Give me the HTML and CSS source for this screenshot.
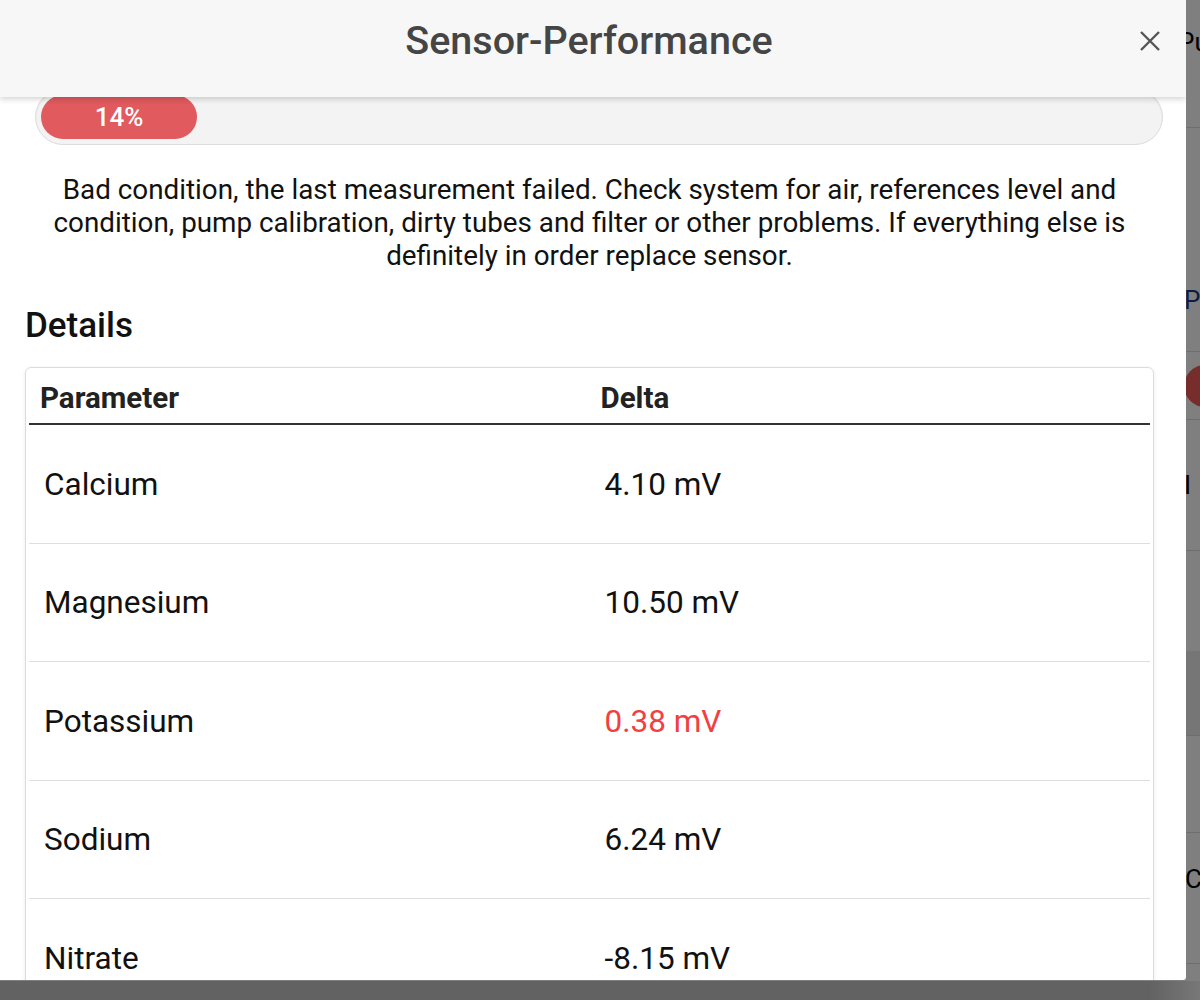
FILE: index.html
```html
<!DOCTYPE html>
<html lang="en">
<head>
<meta charset="utf-8">
<title>Sensor-Performance</title>
<link rel="stylesheet" href="styles.css">
</head>
<body>
<div class="bg-page">
  <div class="bg-row bg-r1"><span class="bg-txt">Pu</span></div>
  <div class="bg-row bg-r2"><span class="bg-txt bg-blue">P</span></div>
  <div class="bg-row bg-r3"><span class="bg-dot"></span></div>
  <div class="bg-row bg-r4"><span class="bg-txt">I</span></div>
  <div class="bg-row bg-r5"></div>
  <div class="bg-row bg-r6 bg-shade"></div>
  <div class="bg-row bg-r7"></div>
  <div class="bg-row bg-r8"><span class="bg-txt">Cc</span></div>
  <div class="bg-row bg-r9"></div>
  <div class="bg-footer"></div>
</div>
<div class="backdrop"></div>

<div class="modal">
  <header class="modal-header">
    <h1 class="modal-title">Sensor-Performance</h1>
    <button class="close-btn" aria-label="Close">
      <svg width="20" height="20" viewBox="0 0 20 20"><path d="M1 1 L19 19 M19 1 L1 19" stroke="#555" stroke-width="2.4" fill="none"/></svg>
    </button>
  </header>
  <div class="modal-body">
    <div class="body-inner">
      <div class="progress">
        <div class="progress-fill" style="width:14%">14%</div>
      </div>
      <p class="message">Bad condition, the last measurement failed. Check system for air, references level and condition, pump calibration, dirty tubes and filter or other problems. If everything else is definitely in order replace sensor.</p>
      <h2 class="section-title">Details</h2>
      <div class="card">
        <table class="details">
          <thead>
            <tr><th>Parameter</th><th>Delta</th></tr>
          </thead>
          <tbody>
            <tr><td>Calcium</td><td>4.10 mV</td></tr>
            <tr><td>Magnesium</td><td>10.50 mV</td></tr>
            <tr><td>Potassium</td><td class="bad">0.38 mV</td></tr>
            <tr><td>Sodium</td><td>6.24 mV</td></tr>
            <tr><td>Nitrate</td><td>-8.15 mV</td></tr>
          </tbody>
        </table>
      </div>
    </div>
  </div>
</div>
</body>
</html>
```

FILE: styles.css
```css
html, body {
  margin: 0;
  padding: 0;
}
body {
  width: 1200px;
  height: 1000px;
  overflow: hidden;
  position: relative;
  font-family: Roboto, "Liberation Sans", Arial, sans-serif;
  background: #fff;
}

/* background page (behind overlay) */
.bg-page {
  display: flex;
  flex-direction: column;
  height: 1000px;
}
.bg-row {
  border-bottom: 1px solid #dcdcdc;
  display: flex;
  align-items: center;
  padding-left: 1184px;
  box-sizing: border-box;
  white-space: nowrap;
  overflow: hidden;
}
.bg-r1 { height: 128px; align-items: flex-start; padding-top: 28px; padding-left: 1178px; }
.bg-r2 { height: 224px; align-items: flex-start; padding-top: 158px; }
.bg-r3 { height: 68px; }
.bg-r4 { height: 131px; }
.bg-r5 { height: 100px; border-bottom: none; }
.bg-r6 { height: 85px; }
.bg-r7 { height: 97px; }
.bg-r8 { height: 131px; align-items: flex-start; padding-top: 32px; padding-left: 1185px; }
.bg-r9 { height: 17px; border-bottom: none; }
.bg-shade { background: #ececec; }
.bg-txt {
  font-size: 26px;
  color: #000;
  line-height: 28px;
}
.bg-blue { color: #1a3a8a; }
.bg-dot {
  width: 42px;
  height: 42px;
  border-radius: 50%;
  background: #f05a5a;
  flex-shrink: 0;
}
.bg-footer {
  flex: 1;
  background: linear-gradient(to right, #c5c5c5 0, #c5c5c5 1150px, #f0f0f0 1200px);
}
.backdrop {
  position: absolute;
  inset: 0;
  background: rgba(0, 0, 0, 0.5);
}

/* modal */
.modal {
  position: absolute;
  left: 0;
  top: 0;
  width: 1186px;
  height: 980px;
  background: #fff;
  border-bottom-right-radius: 3px;
  display: flex;
  flex-direction: column;
  overflow: hidden;
}
.modal-header {
  position: relative;
  z-index: 2;
  height: 97px;
  flex-shrink: 0;
  background: #f7f7f7;
  box-shadow: 0 2px 6px rgba(0, 0, 0, 0.18);
  display: flex;
  align-items: center;
  justify-content: center;
}
.modal-title {
  margin: 0;
  font-size: 39.5px;
  font-weight: 500;
  color: #454545;
  padding-bottom: 16px;
  margin-left: -8px;
}
.close-btn {
  position: absolute;
  right: 26px;
  top: 31px;
  border: none;
  background: none;
  padding: 0;
  width: 20px;
  height: 20px;
  display: flex;
}
.modal-body {
  flex: 1;
  overflow: hidden;
  padding: 0 32px 0 25px;
}
.body-inner {
  margin-top: -8px;
}

.progress {
  margin: 0 -9px 0 10px;
  height: 44px;
  padding: 5px;
  border: 1px solid #dcdcdc;
  background: #f3f3f3;
  border-radius: 28px;
  box-shadow: inset 0 1px 2px rgba(0, 0, 0, 0.05);
}
.progress-fill {
  height: 44px;
  border-radius: 22px;
  background: #e05a5e;
  color: #fff;
  font-size: 26px;
  font-weight: 500;
  display: flex;
  align-items: center;
  justify-content: center;
}

.message {
  margin: 28px 0 0;
  text-align: center;
  font-size: 27.8px;
  line-height: 33px;
  color: #111;
}
.section-title {
  margin: 34px 0 0;
  font-size: 35px;
  font-weight: 500;
  line-height: 40px;
  color: #111;
}
.card {
  margin-top: 21px;
  border: 1px solid #dcdcdc;
  border-radius: 6px;
  box-shadow: 0 1px 4px rgba(0, 0, 0, 0.08);
  padding: 0 3px;
}
.details {
  width: 100%;
  border-collapse: collapse;
  table-layout: fixed;
}
.details th {
  text-align: left;
  font-size: 29.5px;
  font-weight: 700;
  color: #222;
  line-height: 30px;
  padding: 15px 11px 10px;
  border-bottom: 2px solid #333;
}
.details td {
  font-size: 31.5px;
  line-height: 37px;
  color: #111;
  padding: 40.5px 15px 40px;
  border-bottom: 1px solid #dedede;
}
.details td.bad {
  color: #f23f3f;
}
```
